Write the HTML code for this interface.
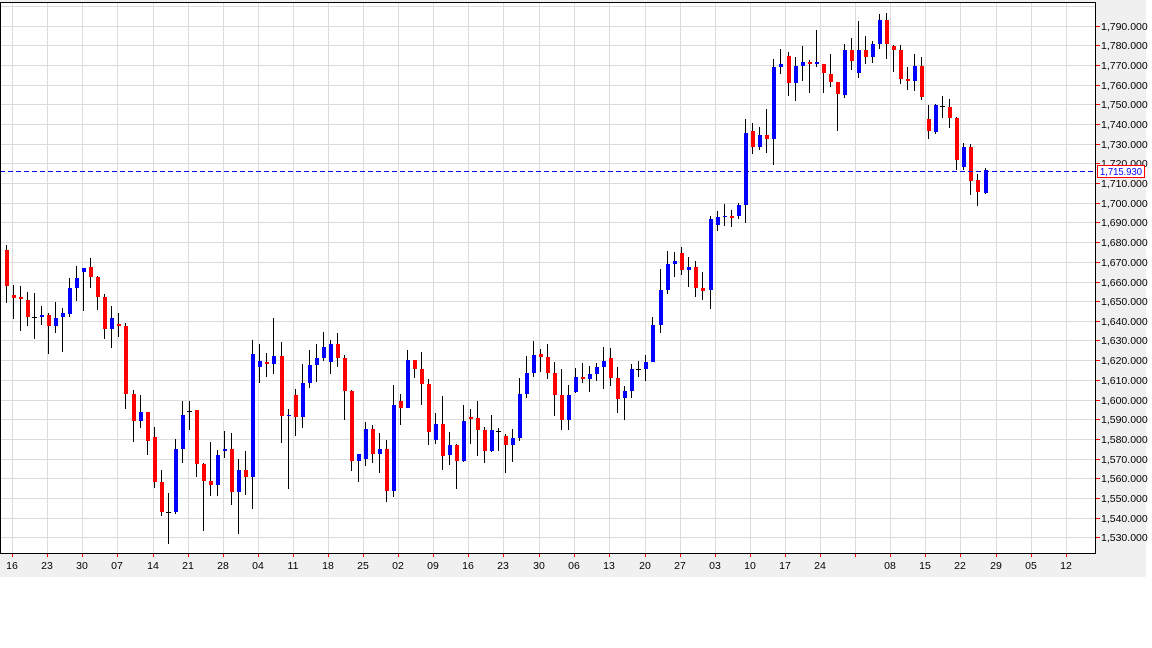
<!DOCTYPE html>
<html><head><meta charset="utf-8"><style>
html,body{margin:0;padding:0;background:#fff;width:1152px;height:648px;overflow:hidden}
svg{display:block}
text{font-family:"Liberation Sans",sans-serif;font-size:10.5px;fill:#000}
</style></head><body>
<svg width="1152" height="648" xmlns="http://www.w3.org/2000/svg">
<defs><pattern id="dash" x="0" y="0" width="8" height="1" patternUnits="userSpaceOnUse"><rect x="0" y="0" width="5" height="1" fill="#0000ff"/></pattern></defs>
<rect x="0" y="0" width="1146" height="577" fill="#f0f0f0"/>
<rect x="0" y="2" width="1095" height="551" fill="#fff"/>
<g stroke="#dcdcdc" stroke-width="1" fill="none" shape-rendering="crispEdges">
<path d="M12.5 2V553M47.5 2V553M82.5 2V553M117.5 2V553M153.5 2V553M188.5 2V553M223.5 2V553M258.5 2V553M293.5 2V553M328.5 2V553M363.5 2V553M398.5 2V553M433.5 2V553M468.5 2V553M503.5 2V553M539.5 2V553M574.5 2V553M609.5 2V553M645.5 2V553M680.5 2V553M715.5 2V553M750.5 2V553M785.5 2V553M820.5 2V553M855.5 2V553M890.5 2V553M925.5 2V553M960.5 2V553M996.5 2V553M1031.5 2V553M1066.5 2V553"/>
<path d="M0 6.5H1095M0 26.5H1095M0 45.5H1095M0 65.5H1095M0 85.5H1095M0 104.5H1095M0 124.5H1095M0 144.5H1095M0 163.5H1095M0 183.5H1095M0 203.5H1095M0 222.5H1095M0 242.5H1095M0 262.5H1095M0 282.5H1095M0 301.5H1095M0 321.5H1095M0 340.5H1095M0 360.5H1095M0 380.5H1095M0 400.5H1095M0 419.5H1095M0 439.5H1095M0 459.5H1095M0 478.5H1095M0 498.5H1095M0 518.5H1095M0 537.5H1095"/>
</g>
<g stroke="#000" stroke-width="1">
<path d="M6.5 245V303M13.5 285V319M20.5 286V331M27.5 292V326M34.5 293V339M41.5 306V325M48.5 313V354M55.5 302V333M62.5 308V352M69.5 278V317M76.5 266V301M83.5 268V311M90.5 258V288M97.5 276V310M104.5 294V339M111.5 306V348M118.5 313V337M125.5 323V409M133.5 390V442M140.5 395V428M147.5 412V455M154.5 427V488M161.5 470V516M168.5 493V544M175.5 439V514M182.5 401V463M189.5 401V430M196.5 410V477M203.5 463V531M210.5 442V496M217.5 450V496M224.5 431V458M231.5 433V505M238.5 459V534M245.5 451V495M252.5 340V509M259.5 344V383M266.5 353V377M273.5 318V374M281.5 342V443M288.5 409V489M295.5 389V436M302.5 364V428M309.5 350V388M316.5 344V382M323.5 332V361M330.5 340V374M337.5 333V367M344.5 355V420M351.5 390V471M358.5 454V482M365.5 422V466M372.5 425V463M379.5 433V473M386.5 440V502M393.5 385V497M400.5 394V425M407.5 350V408M414.5 360V378M421.5 352V405M428.5 379V445M435.5 413V444M442.5 396V470M449.5 432V465M456.5 444V489M463.5 405V462M470.5 409V444M477.5 401V456M484.5 427V463M491.5 415V452M498.5 428V451M505.5 434V473M512.5 429V462M519.5 378V441M526.5 356V398M533.5 341V377M540.5 349V372M547.5 344V379M554.5 362V416M561.5 369V430M568.5 385V430M575.5 368V393M582.5 363V383M589.5 366V392M596.5 363V381M603.5 347V389M610.5 348V386M617.5 367V413M624.5 386V420M631.5 364V398M638.5 361V377M645.5 355V381M652.5 317V362M660.5 269V333M667.5 251V294M674.5 252V277M681.5 247V275M688.5 257V287M695.5 261V297M702.5 272V300M710.5 216V309M717.5 211V231M724.5 204V226M731.5 210V227M738.5 203V219M745.5 119V223M752.5 123V154M759.5 127V150M766.5 109V153M773.5 59V165M780.5 49V74M788.5 52V96M795.5 57V101M802.5 46V81M809.5 60V93M816.5 30V67M823.5 64V93M830.5 54V87M837.5 82V131M844.5 44V98M851.5 38V70M858.5 21V78M865.5 36V64M872.5 41V63M879.5 14V49M886.5 13V59M893.5 45V72M900.5 45V84M907.5 67V90M914.5 54V91M921.5 57V100M928.5 105V139M935.5 104V134M942.5 96V118M949.5 99V128M956.5 117V170M963.5 143V170M970.5 144V195M977.5 174V206M985.5 168V194"/>
</g>
<g fill="#ff0000">
<rect x="5" y="250" width="4" height="36"/><rect x="12" y="295" width="4" height="3"/><rect x="19" y="297" width="4" height="2"/><rect x="26" y="300" width="4" height="17"/><rect x="47" y="315" width="4" height="11"/><rect x="89" y="267" width="4" height="10"/><rect x="96" y="277" width="4" height="20"/><rect x="103" y="297" width="4" height="32"/><rect x="117" y="324" width="4" height="2"/><rect x="124" y="326" width="4" height="68"/><rect x="132" y="394" width="4" height="27"/><rect x="146" y="412" width="4" height="29"/><rect x="153" y="437" width="4" height="45"/><rect x="160" y="482" width="4" height="30"/><rect x="195" y="410" width="4" height="54"/><rect x="202" y="464" width="4" height="17"/><rect x="209" y="481" width="4" height="4"/><rect x="230" y="449" width="4" height="43"/><rect x="244" y="470" width="4" height="7"/><rect x="265" y="362" width="4" height="2"/><rect x="280" y="356" width="4" height="60"/><rect x="294" y="395" width="4" height="22"/><rect x="336" y="344" width="4" height="14"/><rect x="343" y="358" width="4" height="33"/><rect x="350" y="391" width="4" height="70"/><rect x="371" y="429" width="4" height="25"/><rect x="385" y="449" width="4" height="42"/><rect x="399" y="401" width="4" height="7"/><rect x="413" y="360" width="4" height="9"/><rect x="420" y="369" width="4" height="15"/><rect x="427" y="384" width="4" height="48"/><rect x="441" y="424" width="4" height="32"/><rect x="455" y="445" width="4" height="16"/><rect x="469" y="417" width="4" height="2"/><rect x="476" y="418" width="4" height="12"/><rect x="483" y="430" width="4" height="21"/><rect x="504" y="436" width="4" height="9"/><rect x="539" y="354" width="4" height="3"/><rect x="546" y="357" width="4" height="16"/><rect x="553" y="373" width="4" height="22"/><rect x="560" y="395" width="4" height="25"/><rect x="581" y="377" width="4" height="2"/><rect x="609" y="358" width="4" height="20"/><rect x="616" y="378" width="4" height="21"/><rect x="680" y="253" width="4" height="17"/><rect x="694" y="267" width="4" height="21"/><rect x="701" y="288" width="4" height="3"/><rect x="730" y="216" width="4" height="2"/><rect x="751" y="131" width="4" height="16"/><rect x="765" y="135" width="4" height="4"/><rect x="787" y="56" width="4" height="27"/><rect x="808" y="62" width="4" height="2"/><rect x="822" y="64" width="4" height="9"/><rect x="829" y="74" width="4" height="8"/><rect x="836" y="82" width="4" height="12"/><rect x="850" y="50" width="4" height="11"/><rect x="864" y="50" width="4" height="7"/><rect x="885" y="20" width="4" height="24"/><rect x="892" y="46" width="4" height="4"/><rect x="899" y="50" width="4" height="29"/><rect x="906" y="79" width="4" height="2"/><rect x="920" y="66" width="4" height="31"/><rect x="927" y="119" width="4" height="12"/><rect x="948" y="107" width="4" height="11"/><rect x="955" y="118" width="4" height="42"/><rect x="969" y="147" width="4" height="34"/><rect x="976" y="180" width="4" height="12"/>
</g>
<g fill="#0000ff">
<rect x="40" y="315" width="4" height="2"/><rect x="54" y="318" width="4" height="8"/><rect x="61" y="313" width="4" height="4"/><rect x="68" y="288" width="4" height="26"/><rect x="75" y="278" width="4" height="10"/><rect x="82" y="268" width="4" height="4"/><rect x="110" y="318" width="4" height="11"/><rect x="139" y="412" width="4" height="9"/><rect x="174" y="449" width="4" height="63"/><rect x="181" y="415" width="4" height="34"/><rect x="216" y="455" width="4" height="30"/><rect x="223" y="449" width="4" height="2"/><rect x="237" y="470" width="4" height="22"/><rect x="251" y="354" width="4" height="123"/><rect x="258" y="361" width="4" height="6"/><rect x="272" y="356" width="4" height="8"/><rect x="287" y="415" width="4" height="1"/><rect x="301" y="383" width="4" height="34"/><rect x="308" y="365" width="4" height="18"/><rect x="315" y="358" width="4" height="7"/><rect x="322" y="347" width="4" height="11"/><rect x="329" y="344" width="4" height="18"/><rect x="357" y="454" width="4" height="7"/><rect x="364" y="429" width="4" height="30"/><rect x="378" y="449" width="4" height="5"/><rect x="392" y="405" width="4" height="86"/><rect x="406" y="360" width="4" height="48"/><rect x="434" y="424" width="4" height="16"/><rect x="448" y="445" width="4" height="10"/><rect x="462" y="421" width="4" height="40"/><rect x="490" y="430" width="4" height="21"/><rect x="511" y="438" width="4" height="7"/><rect x="518" y="394" width="4" height="44"/><rect x="525" y="373" width="4" height="21"/><rect x="532" y="355" width="4" height="18"/><rect x="567" y="395" width="4" height="25"/><rect x="574" y="377" width="4" height="15"/><rect x="588" y="374" width="4" height="5"/><rect x="595" y="367" width="4" height="7"/><rect x="602" y="361" width="4" height="6"/><rect x="623" y="391" width="4" height="7"/><rect x="630" y="369" width="4" height="22"/><rect x="644" y="362" width="4" height="7"/><rect x="651" y="325" width="4" height="37"/><rect x="659" y="290" width="4" height="35"/><rect x="666" y="264" width="4" height="26"/><rect x="673" y="261" width="4" height="3"/><rect x="687" y="267" width="4" height="3"/><rect x="709" y="219" width="4" height="71"/><rect x="716" y="217" width="4" height="8"/><rect x="723" y="216" width="4" height="1"/><rect x="737" y="205" width="4" height="11"/><rect x="744" y="133" width="4" height="72"/><rect x="758" y="135" width="4" height="12"/><rect x="772" y="67" width="4" height="72"/><rect x="779" y="64" width="4" height="3"/><rect x="794" y="66" width="4" height="17"/><rect x="801" y="62" width="4" height="4"/><rect x="815" y="62" width="4" height="2"/><rect x="843" y="50" width="4" height="45"/><rect x="857" y="50" width="4" height="23"/><rect x="871" y="44" width="4" height="13"/><rect x="878" y="20" width="4" height="24"/><rect x="913" y="66" width="4" height="15"/><rect x="934" y="105" width="4" height="27"/><rect x="962" y="147" width="4" height="20"/><rect x="984" y="170" width="4" height="23"/>
</g>
<g fill="#000"><rect x="32" y="317" width="5" height="1"/><rect x="166" y="512" width="5" height="1"/><rect x="187" y="411" width="5" height="1"/><rect x="496" y="431" width="5" height="1"/><rect x="636" y="369" width="5" height="1"/><rect x="940" y="106" width="5" height="1"/></g>
<rect x="0" y="171" width="1095" height="1" fill="url(#dash)"/>
<path d="M0.5 2V553.5H1095.5V2M0 2.5H1095" stroke="#000" fill="none" shape-rendering="crispEdges"/>
<g stroke="#ff0000" shape-rendering="crispEdges"><path d="M1096 26.5h4M1096 45.5h4M1096 65.5h4M1096 85.5h4M1096 104.5h4M1096 124.5h4M1096 144.5h4M1096 163.5h4M1096 183.5h4M1096 203.5h4M1096 222.5h4M1096 242.5h4M1096 262.5h4M1096 282.5h4M1096 301.5h4M1096 321.5h4M1096 340.5h4M1096 360.5h4M1096 380.5h4M1096 400.5h4M1096 419.5h4M1096 439.5h4M1096 459.5h4M1096 478.5h4M1096 498.5h4M1096 518.5h4M1096 537.5h4"/>
<path d="M12.5 554v3M47.5 554v3M82.5 554v3M117.5 554v3M153.5 554v3M188.5 554v3M223.5 554v3M258.5 554v3M293.5 554v3M328.5 554v3M363.5 554v3M398.5 554v3M433.5 554v3M468.5 554v3M503.5 554v3M539.5 554v3M574.5 554v3M609.5 554v3M645.5 554v3M680.5 554v3M715.5 554v3M750.5 554v3M785.5 554v3M820.5 554v3M855.5 554v3M890.5 554v3M925.5 554v3M960.5 554v3M996.5 554v3M1031.5 554v3M1066.5 554v3"/></g>
<g>
<text x="1101" y="30">1,790.000</text><text x="1101" y="49">1,780.000</text><text x="1101" y="69">1,770.000</text><text x="1101" y="89">1,760.000</text><text x="1101" y="108">1,750.000</text><text x="1101" y="128">1,740.000</text><text x="1101" y="148">1,730.000</text><text x="1101" y="167">1,720.000</text><text x="1101" y="187">1,710.000</text><text x="1101" y="207">1,700.000</text><text x="1101" y="226">1,690.000</text><text x="1101" y="246">1,680.000</text><text x="1101" y="266">1,670.000</text><text x="1101" y="286">1,660.000</text><text x="1101" y="305">1,650.000</text><text x="1101" y="325">1,640.000</text><text x="1101" y="344">1,630.000</text><text x="1101" y="364">1,620.000</text><text x="1101" y="384">1,610.000</text><text x="1101" y="404">1,600.000</text><text x="1101" y="423">1,590.000</text><text x="1101" y="443">1,580.000</text><text x="1101" y="463">1,570.000</text><text x="1101" y="482">1,560.000</text><text x="1101" y="502">1,550.000</text><text x="1101" y="522">1,540.000</text><text x="1101" y="541">1,530.000</text>
</g>
<rect x="1097.5" y="165.5" width="47" height="12" fill="#fff" stroke="#ff0000" shape-rendering="crispEdges"/>
<text x="1100" y="175" textLength="42" lengthAdjust="spacingAndGlyphs" style="fill:#0000ff">1,715.930</text>
<g text-anchor="middle">
<text x="12" y="569">16</text><text x="47" y="569">23</text><text x="82" y="569">30</text><text x="117" y="569">07</text><text x="153" y="569">14</text><text x="188" y="569">21</text><text x="223" y="569">28</text><text x="258" y="569">04</text><text x="293" y="569">11</text><text x="328" y="569">18</text><text x="363" y="569">25</text><text x="398" y="569">02</text><text x="433" y="569">09</text><text x="468" y="569">16</text><text x="503" y="569">23</text><text x="539" y="569">30</text><text x="574" y="569">06</text><text x="609" y="569">13</text><text x="645" y="569">20</text><text x="680" y="569">27</text><text x="715" y="569">03</text><text x="750" y="569">10</text><text x="785" y="569">17</text><text x="820" y="569">24</text><text x="890" y="569">08</text><text x="925" y="569">15</text><text x="960" y="569">22</text><text x="996" y="569">29</text><text x="1031" y="569">05</text><text x="1066" y="569">12</text>
</g>
</svg>
</body></html>
